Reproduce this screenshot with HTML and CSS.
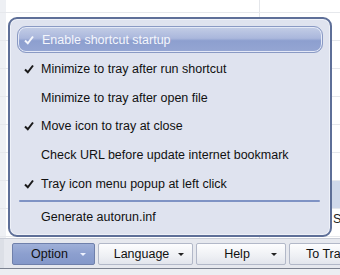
FILE: index.html
```html
<!DOCTYPE html>
<html>
<head>
<meta charset="utf-8">
<link rel="stylesheet" href="styles.css">
</head>
<body>
<div class="app">
  <div class="grid">
    <div class="row"></div>
    <div class="row"></div>
    <div class="row"></div>
    <div class="row"></div>
    <div class="row"></div>
    <div class="row"></div>
    <div class="row sel"></div>
    <div class="row"><span class="peek">So</span></div>
    <div class="row"></div>
  </div>
  <div class="toolbar">
    <div class="btn pressed w1"><span>Option</span><i class="arr"></i></div>
    <div class="btn w2"><span>Language</span><i class="arr"></i></div>
    <div class="btn w3"><span>Help</span><i class="arr"></i></div>
    <div class="btn w4"><span>To Tray</span></div>
  </div>
  <div class="status"></div>
  <div class="menu">
    <div class="item hl"><svg class="ck" viewBox="0 0 10 10"><path d="M1 5.5 L3.8 8.3 L9 1.5" /></svg><span>Enable shortcut startup</span></div>
    <div class="item"><svg class="ck" viewBox="0 0 10 10"><path d="M1 5.5 L3.8 8.3 L9 1.5" /></svg><span>Minimize to tray after run shortcut</span></div>
    <div class="item"><span>Minimize to tray after open file</span></div>
    <div class="item"><svg class="ck" viewBox="0 0 10 10"><path d="M1 5.5 L3.8 8.3 L9 1.5" /></svg><span>Move icon to tray at close</span></div>
    <div class="item"><span>Check URL before update internet bookmark</span></div>
    <div class="item"><svg class="ck" viewBox="0 0 10 10"><path d="M1 5.5 L3.8 8.3 L9 1.5" /></svg><span>Tray icon menu popup at left click</span></div>
    <div class="sep"></div>
    <div class="item"><span>Generate autorun.inf</span></div>
  </div>
</div>
</body>
</html>
```
FILE: styles.css
```css
html, body {
  margin: 0;
  padding: 0;
}
body {
  width: 340px;
  height: 275px;
  overflow: hidden;
  background: #ffffff;
  font-family: "Liberation Sans", Arial, sans-serif;
  font-size: 12px;
  color: #1a1a1a;
}
.app {
  position: relative;
  width: 340px;
  height: 275px;
  display: flex;
  flex-direction: column;
  overflow: hidden;
}
.grid {
  flex: 1;
  min-height: 0;
  overflow: hidden;
  display: flex;
  flex-direction: column;
  padding-top: 12px;
  background:
    linear-gradient(to right, transparent 259px, #e4e6ea 259px, #e4e6ea 260px, transparent 260px),
    linear-gradient(to right, #eef0f4 0, #eef0f4 6px, transparent 6px);
}
.row {
  height: 27px;
  flex: none;
  border-top: 1px solid #e6e8ec;
  position: relative;
}
.row.sel {
  background: linear-gradient(to right, transparent 330px, #cfd8ea 330px);
}
.peek {
  position: absolute;
  left: 333px;
  top: 3px;
  font-size: 12.5px;
  color: #222;
}
.toolbar {
  height: 31px;
  flex: none;
  box-sizing: border-box;
  display: flex;
  align-items: center;
  gap: 3px;
  padding: 1px 0 0 12px;
  background: #e6e8ee;
  border-top: 1px solid #c8ccd6;
  border-bottom: 1px solid #7c8290;
  box-shadow: inset 4px 0 0 #dcdfe6;
}
.status {
  height: 6px;
  flex: none;
  background: #eceef2;
}
.btn {
  position: relative;
  height: 22px;
  box-sizing: border-box;
  display: flex;
  align-items: center;
  justify-content: center;
  padding-right: 8px;
  border: 1px solid #b2b8c8;
  border-radius: 2px;
  background: linear-gradient(#fdfdfe, #eef0f4 60%, #e2e5ec);
  font-size: 12.5px;
  color: #111;
  flex: none;
}
.btn.pressed {
  background: linear-gradient(#9fb0d8, #8c9fcf 50%, #8498c9);
  border-color: #6f80ab;
}
.w1 { width: 83px; }
.w2 { width: 95px; }
.w3 { width: 90px; }
.w4 { width: 90px; justify-content: flex-start; padding-left: 16px; }
.arr {
  position: absolute;
  right: 8px;
  top: 9px;
  width: 0;
  height: 0;
  border-left: 3px solid transparent;
  border-right: 3px solid transparent;
  border-top: 3px solid #222;
}
.pressed .arr { border-top-color: #eef2ff; }
.menu {
  position: absolute;
  left: 8px;
  top: 17px;
  width: 324px;
  height: 220px;
  box-sizing: border-box;
  background: #dfe3ef;
  border: 2px solid #5e6f98;
  border-radius: 9px;
  box-shadow: inset 0 0 0 1px #eef1f8;
  padding: 7px 7px 0 7px;
  display: flex;
  flex-direction: column;
}
.item {
  height: 28.6px;
  display: flex;
  align-items: center;
  padding-left: 24px;
  position: relative;
  font-size: 12.5px;
  color: #111;
  flex: none;
}
.item.hl {
  height: 25px;
  margin-bottom: 2px;
  border: 1px solid #8a9ac4;
  border-radius: 9px;
  background: linear-gradient(#c3cde6, #aab7dc 45%, #8d9fcf 55%, #95a6d3);
  box-shadow: inset 0 0 0 1px #e4e9f7;
  color: #f4f6fc;
}
.item.hl .ck { left: 6px; }
.ck {
  position: absolute;
  left: 7px;
  top: 50%;
  margin-top: -5px;
  width: 10px;
  height: 10px;
  fill: none;
  stroke: #1a1a1a;
  stroke-width: 2;
}
.item.hl .ck { stroke: #f4f6fc; }
.sep {
  height: 2px;
  margin: 2px 3px 1px 2px;
  background: #7f93c4;
  border-radius: 1px;
  flex: none;
}
```
